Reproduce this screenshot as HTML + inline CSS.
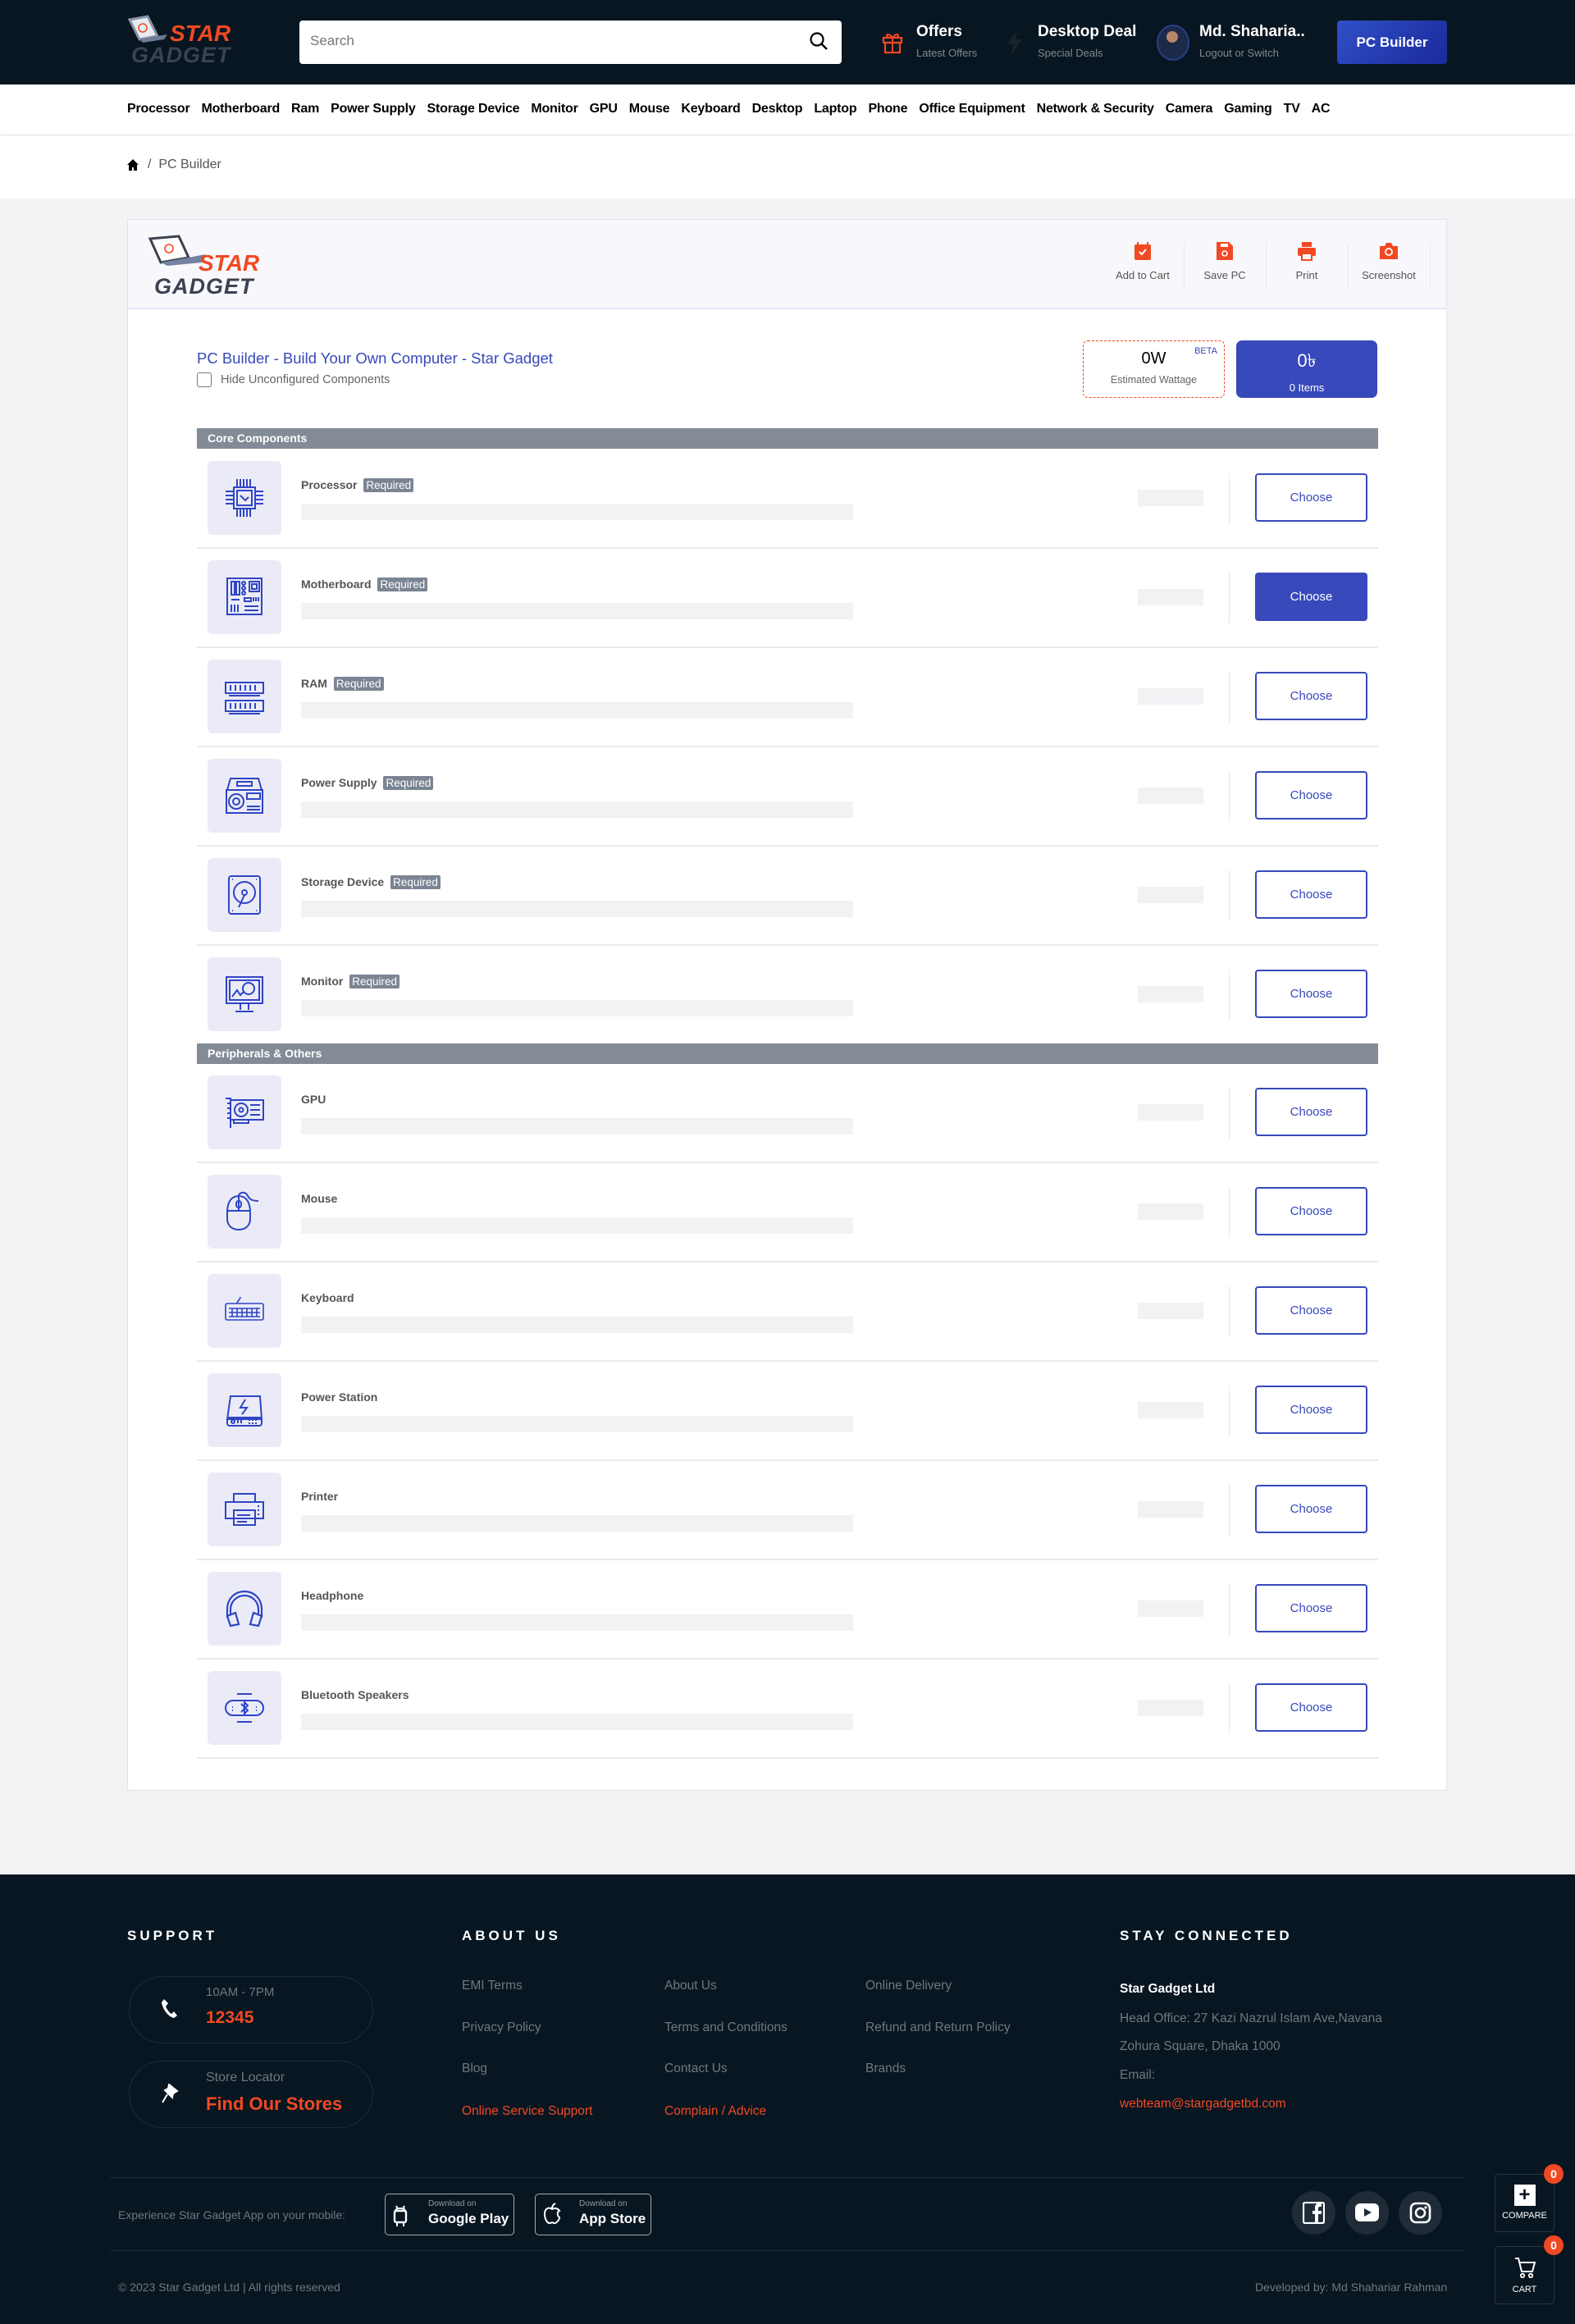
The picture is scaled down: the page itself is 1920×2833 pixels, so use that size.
<!DOCTYPE html>
<html><head><meta charset="utf-8">
<style>
*{box-sizing:border-box;margin:0;padding:0}
body{width:1920px;height:2833px;position:relative;background:#f2f3f5;font-family:"Liberation Sans",sans-serif;overflow:hidden}
.a{position:absolute}
.hdr{left:0;top:0;width:1920px;height:103px;background:#081621}
.nav{left:0;top:103px;width:1920px;height:61px;background:#fff;box-shadow:0 2px 3px rgba(0,0,0,.08)}
.nv span{font-size:16px;font-weight:bold;color:#000;margin-right:14px;letter-spacing:-.2px}
.bc{left:0;top:165px;width:1920px;height:77px;background:#fff}
.card{left:155px;top:267px;width:1609px;height:1916px;background:#fff;border:1px solid #e1e3ea}
.ch{left:0;top:0;width:100%;height:109px;background:#f8f8fc;border-bottom:2px solid #e2e4f3}
.tool{top:26px;width:90px;text-align:center;font-size:13px;color:#555}
.tool svg{display:block;margin:0 auto 10px}
.sep{top:28px;width:1px;height:55px;background:#e6e6ee}
.row{left:240px;width:1440px;height:107px;border-bottom:2px solid #e9e9ec}
.ib{position:absolute;left:13px;top:0;width:90px;height:90px;background:#ebebf7;border-radius:6px}
.ib svg{position:absolute;left:20px;top:20px}
.lb{position:absolute;left:127px;top:21px;font-size:14px;font-weight:bold;color:#555}
.rq{background:#7b8492;color:#fff;font-weight:normal;padding:1px 3px;border-radius:2px;margin-left:4px;font-size:13.5px}
.bar{position:absolute;left:127px;top:52px;width:673px;height:20px;background:#f1f2f4}
.sb{position:absolute;left:1147px;top:35px;width:80px;height:20px;background:#f1f2f4}
.dv{position:absolute;left:1258px;top:15px;width:1px;height:62px;background:#e5e5e5}
.btn{position:absolute;left:1290px;top:15px;width:137px;height:59px;border:2px solid #3749bb;border-radius:4px;color:#3749bb;font-size:15px;text-align:center;line-height:55px}
.btn.f{background:#3749bb;color:#fff}
.sec{left:240px;width:1440px;height:25px;background:#828b96;color:#fff;font-size:14px;font-weight:bold;padding-left:13px;line-height:25px}
.ft{left:0;top:2285px;width:1920px;height:548px;background:#081621}
.fh{font-size:17px;color:#fff;letter-spacing:4px;font-weight:bold}
.fl{font-size:15.5px;color:#6f7780}
.pill{width:298px;height:82px;border:1px solid #1d2b36;border-radius:41px}
.soc{width:53px;height:53px;border-radius:50%;background:#1f2c37}
.flt{width:73px;height:71px;border:1px solid #2a3640;border-radius:4px;background:#081621;color:#fff;font-size:11px;text-align:center}
.bdg{width:24px;height:24px;border-radius:50%;background:#f04923;color:#fff;font-size:14px;font-weight:bold;text-align:center;line-height:24px}
</style></head><body>

<div class="a hdr"></div>
<svg class="a" style="left:152px;top:18px" width="145" height="60" viewBox="0 0 145 60">
<path d="M6 6 L28 2 L40 26 L18 30 Z" fill="#e7ebf2" stroke="#8a92a8" stroke-width="3"/>
<path d="M18 30 L40 26 L52 24 L48 30 L22 34 Z" fill="#6f7a93"/>
<circle cx="22" cy="16" r="5" fill="none" stroke="#f04923" stroke-width="1.5"/>
<text x="55" y="32" font-family="Liberation Sans" font-weight="bold" font-style="italic" font-size="28" fill="#f04923">STAR</text>
<text x="8" y="58" font-family="Liberation Sans" font-weight="bold" font-style="italic" font-size="27" fill="#3b4250" letter-spacing="1">GADGET</text>
</svg>
<div class="a" style="left:365px;top:25px;width:661px;height:53px;background:#fff;border-radius:4px"></div>
<div class="a" style="left:378px;top:40px;font-size:17px;color:#757575">Search</div>
<svg class="a" style="left:986px;top:38px" width="24" height="24" viewBox="0 0 24 24"><circle cx="10" cy="10" r="7.5" fill="none" stroke="#000" stroke-width="2.2"/><path d="M15.5 15.5 L22 22" stroke="#000" stroke-width="2.4"/></svg>
<svg class="a" style="left:1074px;top:36px" width="28" height="30" viewBox="0 0 28 30"><rect x="3" y="10" width="22" height="6" fill="none" stroke="#f04923" stroke-width="2.2"/><rect x="5" y="16" width="18" height="12" fill="none" stroke="#f04923" stroke-width="2.2"/><path d="M14 10 V28 M14 10 C8 2 4 8 10 10 M14 10 C20 2 24 8 18 10" fill="none" stroke="#f04923" stroke-width="2"/></svg>
<div class="a" style="left:1117px;top:28px;color:#fff;font-size:19px;font-weight:bold">Offers</div>
<div class="a" style="left:1117px;top:57px;color:#808890;font-size:13px">Latest Offers</div>
<svg class="a" style="left:1226px;top:36px" width="22" height="32" viewBox="0 0 22 32"><path d="M14 0 L2 18 H10 L6 32 L20 12 H12 Z" fill="#1a232c"/></svg>
<div class="a" style="left:1265px;top:28px;color:#fff;font-size:19px;font-weight:bold">Desktop Deal</div>
<div class="a" style="left:1265px;top:57px;color:#808890;font-size:13px">Special Deals</div>
<div class="a" style="left:1410px;top:30px;width:40px;height:44px;border-radius:50%;background:#1b2a48;border:2px solid #2a3e86"></div>
<div class="a" style="left:1422px;top:38px;width:14px;height:14px;border-radius:50%;background:#b98769"></div>
<div class="a" style="left:1462px;top:28px;color:#fff;font-size:19px;font-weight:bold">Md. Shaharia..</div>
<div class="a" style="left:1462px;top:57px;color:#808890;font-size:13px">Logout or Switch</div>
<div class="a" style="left:1630px;top:25px;width:134px;height:53px;border-radius:4px;background:linear-gradient(135deg,#3050c8,#1a2a9a);color:#fff;font-size:17px;font-weight:bold;text-align:center;line-height:53px">PC Builder</div>

<div class="a nav"></div>
<div class="a nv" style="left:155px;top:124px;white-space:nowrap"><span>Processor</span><span>Motherboard</span><span>Ram</span><span>Power Supply</span><span>Storage Device</span><span>Monitor</span><span>GPU</span><span>Mouse</span><span>Keyboard</span><span>Desktop</span><span>Laptop</span><span>Phone</span><span>Office Equipment</span><span>Network &amp; Security</span><span>Camera</span><span>Gaming</span><span>TV</span><span>AC</span></div>
<div class="a bc"></div>
<svg class="a" style="left:154px;top:193px" width="16" height="16" viewBox="0 0 16 16"><path d="M8 1 L1 8 H3 V15 H7 V11 H9 V15 H13 V8 H15 Z" fill="#000"/></svg>
<div class="a" style="left:180px;top:192px;font-size:16px;color:#555">/&nbsp;&nbsp;PC Builder</div>

<div class="a card">
<div class="a ch"></div>
<svg class="a" style="left:22px;top:18px" width="150" height="76" viewBox="0 0 150 76">
<path d="M5 5 L40 2 L52 28 L18 34 Z" fill="#fff" stroke="#3b4250" stroke-width="3"/>
<path d="M18 34 L52 28 L72 24 L68 34 L26 38 Z" fill="#7583a3"/>
<circle cx="28" cy="17" r="5" fill="none" stroke="#f04923" stroke-width="1.6"/>
<text x="64" y="44" font-family="Liberation Sans" font-weight="bold" font-style="italic" font-size="28" fill="#f04923">STAR</text>
<text x="10" y="72" font-family="Liberation Sans" font-weight="bold" font-style="italic" font-size="27" fill="#3b4250" letter-spacing="1">GADGET</text>
</svg>
<div class="a tool" style="left:1192px"><svg width="22" height="24" viewBox="0 0 22 24"><rect x="1" y="4" width="20" height="19" rx="2" fill="#f04923"/><path d="M5 1V6M17 1V6" stroke="#f04923" stroke-width="2"/><path d="M7 13 L10 16 L15 10" stroke="#fff" stroke-width="2" fill="none"/></svg>Add to Cart</div>
<div class="a sep" style="left:1287px"></div>
<div class="a tool" style="left:1292px"><svg width="22" height="24" viewBox="0 0 22 24"><path d="M1 1H16L21 6V23H1Z" fill="#f04923"/><circle cx="11" cy="15" r="3" fill="none" stroke="#fff" stroke-width="1.6"/><rect x="6" y="3" width="9" height="4" fill="#fff"/></svg>Save PC</div>
<div class="a sep" style="left:1387px"></div>
<div class="a tool" style="left:1392px"><svg width="24" height="24" viewBox="0 0 24 24"><rect x="6" y="1" width="12" height="6" fill="#f04923"/><rect x="1" y="8" width="22" height="10" rx="2" fill="#f04923"/><rect x="6" y="15" width="12" height="8" fill="#fff" stroke="#f04923" stroke-width="2"/></svg>Print</div>
<div class="a sep" style="left:1487px"></div>
<div class="a tool" style="left:1492px"><svg width="24" height="24" viewBox="0 0 24 24"><path d="M1 6H7L9 2H15L17 6H23V22H1Z" fill="#f04923"/><circle cx="12" cy="13" r="4" fill="none" stroke="#fff" stroke-width="1.8"/></svg>Screenshot</div>
<div class="a sep" style="left:1587px"></div>
</div>

<div class="a" style="left:240px;top:426px;font-size:18.5px;color:#3749bb">PC Builder - Build Your Own Computer - Star Gadget</div>
<div class="a" style="left:240px;top:454px;width:18px;height:18px;border:1px solid #777;border-radius:3px"></div>
<div class="a" style="left:269px;top:455px;font-size:14.5px;color:#666">Hide Unconfigured Components</div>
<div class="a" style="left:1320px;top:415px;width:173px;height:70px;border:1.5px dashed #f04923;border-radius:6px;text-align:center">
<div style="font-size:20px;color:#000;margin-top:10px">0W</div><div style="font-size:12.5px;color:#666;margin-top:7px">Estimated Wattage</div>
<div class="a" style="right:8px;top:6px;font-size:11px;color:#3749bb">BETA</div></div>
<div class="a" style="left:1507px;top:415px;width:172px;height:70px;background:#3749bb;border-radius:7px;text-align:center;color:#fff">
<div style="font-size:22px;margin-top:8px">0৳</div><div style="font-size:13px;margin-top:5px">0 Items</div></div>

<div class="a sec" style="top:522px">Core Components</div>

<div class="a row" style="top:562px"><div class="ib"><svg width="50" height="50" viewBox="0 0 50 50" fill="none" stroke="#2f45c5" stroke-width="2"><rect x="12" y="12" width="26" height="26"/><rect x="16" y="16" width="18" height="18"/><path d="M16 2V12M20 2V12M24 2V12M28 2V12M32 2V12M16 38V48M20 38V48M24 38V48M28 38V48M32 38V48M2 17H12M2 22H12M2 27H12M2 32H12M38 17H48M38 22H48M38 27H48M38 32H48M20 22L26 28L30 24"/></svg></div><div class="lb">Processor <span class="rq">Required</span></div><div class="bar"></div><div class="sb"></div><div class="dv"></div><div class="btn">Choose</div></div>
<div class="a row" style="top:683px"><div class="ib"><svg width="50" height="50" viewBox="0 0 50 50" fill="none" stroke="#2f45c5" stroke-width="2"><rect x="4" y="2" width="42" height="44"/><rect x="9" y="6" width="4" height="16"/><rect x="15" y="6" width="4" height="16"/><circle cx="24" cy="8" r="2"/><circle cx="24" cy="14" r="2"/><circle cx="24" cy="20" r="2"/><rect x="31" y="6" width="12" height="12"/><rect x="34" y="9" width="6" height="6"/><rect x="25" y="26" width="8" height="4"/><path d="M36 25V30M39 25V30M42 25V30M9 28H19M9 34V43M13 34V43M17 34V43M25 36H42M25 41H42"/></svg></div><div class="lb">Motherboard <span class="rq">Required</span></div><div class="bar"></div><div class="sb"></div><div class="dv"></div><div class="btn f">Choose</div></div>
<div class="a row" style="top:804px"><div class="ib"><svg width="50" height="50" viewBox="0 0 50 50" fill="none" stroke="#2f45c5" stroke-width="2"><rect x="2" y="8" width="46" height="13"/><rect x="2" y="30" width="46" height="13"/><path d="M8 11V18M14 11V18M20 11V18M26 11V18M32 11V18M38 11V18M8 33V40M14 33V40M20 33V40M26 33V40M32 33V40M38 33V40M6 24H44M6 46H44"/></svg></div><div class="lb">RAM <span class="rq">Required</span></div><div class="bar"></div><div class="sb"></div><div class="dv"></div><div class="btn">Choose</div></div>
<div class="a row" style="top:925px"><div class="ib"><svg width="50" height="50" viewBox="0 0 50 50" fill="none" stroke="#2f45c5" stroke-width="2"><path d="M8 4H42L46 18H4Z"/><rect x="16" y="8" width="18" height="5"/><rect x="3" y="18" width="44" height="28"/><circle cx="15" cy="32" r="9"/><circle cx="15" cy="32" r="4"/><rect x="28" y="22" width="16" height="7"/><path d="M28 38H44M28 42H44"/></svg></div><div class="lb">Power Supply <span class="rq">Required</span></div><div class="bar"></div><div class="sb"></div><div class="dv"></div><div class="btn">Choose</div></div>
<div class="a row" style="top:1046px"><div class="ib"><svg width="50" height="50" viewBox="0 0 50 50" fill="none" stroke="#2f45c5" stroke-width="2"><rect x="6" y="2" width="38" height="46" rx="3"/><circle cx="25" cy="22" r="13"/><circle cx="25" cy="22" r="3"/><path d="M25 25L18 40M10 6h1M39 6h1M10 44h1M39 44h1"/></svg></div><div class="lb">Storage Device <span class="rq">Required</span></div><div class="bar"></div><div class="sb"></div><div class="dv"></div><div class="btn">Choose</div></div>
<div class="a row" style="top:1167px"><div class="ib"><svg width="50" height="50" viewBox="0 0 50 50" fill="none" stroke="#2f45c5" stroke-width="2"><rect x="3" y="4" width="44" height="32"/><rect x="7" y="8" width="36" height="24"/><circle cx="30" cy="18" r="7"/><path d="M10 28L16 20L20 26L24 22M20 36V44M30 36V44M14 46H36"/></svg></div><div class="lb">Monitor <span class="rq">Required</span></div><div class="bar"></div><div class="sb"></div><div class="dv"></div><div class="btn">Choose</div></div>

<div class="a sec" style="top:1272px">Peripherals &amp; Others</div>

<div class="a row" style="top:1311px"><div class="ib"><svg width="50" height="50" viewBox="0 0 50 50" fill="none" stroke="#2f45c5" stroke-width="2"><rect x="8" y="10" width="40" height="24"/><path d="M2 8H8V44M4 14H8M4 20H8M4 26H8M4 32H8M12 34V38H30V34"/><circle cx="21" cy="22" r="8"/><circle cx="21" cy="22" r="2.5"/><path d="M32 16H44M32 22H44M32 28H44"/></svg></div><div class="lb">GPU</div><div class="bar"></div><div class="sb"></div><div class="dv"></div><div class="btn">Choose</div></div>
<div class="a row" style="top:1432px"><div class="ib"><svg width="50" height="50" viewBox="0 0 50 50" fill="none" stroke="#2f45c5" stroke-width="2"><path d="M4 26C4 12 10 6 18 6C26 6 32 12 32 26V34C32 42 26 47 18 47C10 47 4 42 4 34Z"/><path d="M4 24H32M18 6V24"/><rect x="15" y="12" width="6" height="8" rx="3"/><path d="M18 6C18 2 24 0 28 4C30 8 32 12 42 12"/></svg></div><div class="lb">Mouse</div><div class="bar"></div><div class="sb"></div><div class="dv"></div><div class="btn">Choose</div></div>
<div class="a row" style="top:1553px"><div class="ib"><svg width="50" height="50" viewBox="0 0 50 50" fill="none" stroke="#2f45c5" stroke-width="1.6"><rect x="2" y="16" width="46" height="20" rx="2"/><path d="M6 22H44M6 27H44M6 32H44M10 22V32M16 22V32M22 22V32M28 22V32M34 22V32M40 22V32M16 16C16 12 20 12 20 8"/></svg></div><div class="lb">Keyboard</div><div class="bar"></div><div class="sb"></div><div class="dv"></div><div class="btn">Choose</div></div>
<div class="a row" style="top:1674px"><div class="ib"><svg width="50" height="50" viewBox="0 0 50 50" fill="none" stroke="#2f45c5" stroke-width="2"><path d="M8 8H44L46 36H4Z"/><rect x="4" y="34" width="42" height="10" rx="3"/><path d="M26 12L20 22H28L22 30"/><circle cx="11" cy="39" r="2"/><path d="M17 37V41M21 37V41M30 37h2M34 37h2M38 37h2M30 41h2M34 41h2M38 41h2"/></svg></div><div class="lb">Power Station</div><div class="bar"></div><div class="sb"></div><div class="dv"></div><div class="btn">Choose</div></div>
<div class="a row" style="top:1795px"><div class="ib"><svg width="50" height="50" viewBox="0 0 50 50" fill="none" stroke="#2f45c5" stroke-width="2"><rect x="12" y="6" width="26" height="10"/><rect x="2" y="16" width="46" height="20"/><rect x="12" y="26" width="26" height="18"/><path d="M16 32H32M16 36H32M16 40H28M42 20v2M42 25v2M42 30v2"/></svg></div><div class="lb">Printer</div><div class="bar"></div><div class="sb"></div><div class="dv"></div><div class="btn">Choose</div></div>
<div class="a row" style="top:1916px"><div class="ib"><svg width="50" height="50" viewBox="0 0 50 50" fill="none" stroke="#2f45c5" stroke-width="2.2"><path d="M4 36V26C4 12 14 4 25 4C36 4 46 12 46 26V36"/><path d="M8 32V26C8 16 16 9 25 9C34 9 42 16 42 26V32"/><path d="M4 34L14 30L18 44L8 46Z"/><path d="M46 34L36 30L32 44L42 46Z"/></svg></div><div class="lb">Headphone</div><div class="bar"></div><div class="sb"></div><div class="dv"></div><div class="btn">Choose</div></div>
<div class="a row" style="top:2037px"><div class="ib"><svg width="50" height="50" viewBox="0 0 50 50" fill="none" stroke="#2f45c5" stroke-width="2"><rect x="2" y="16" width="46" height="18" rx="9"/><path d="M21 20L29 28L25 32V18L29 22L21 30M16 8H34M16 42H34M10 24h1M10 28h1M39 24h1M39 28h1"/></svg></div><div class="lb">Bluetooth Speakers</div><div class="bar"></div><div class="sb"></div><div class="dv"></div><div class="btn">Choose</div></div>

<div class="a ft"></div>
<div class="a fh" style="left:155px;top:2350px">SUPPORT</div>
<div class="a fh" style="left:563px;top:2350px">ABOUT US</div>
<div class="a fh" style="left:1365px;top:2350px">STAY CONNECTED</div>
<div class="a pill" style="left:157px;top:2409px"></div>
<svg class="a" style="left:196px;top:2436px" width="20" height="24" viewBox="0 0 20 24"><path d="M4 1L9 6L6 10C8 14 10 17 13 19L16 16L20 21L16 24C8 22 2 12 1 5Z" fill="#fff"/></svg>
<div class="a fl" style="left:251px;top:2420px;font-size:15px">10AM - 7PM</div>
<div class="a" style="left:251px;top:2448px;font-size:21px;color:#f04923;font-weight:bold">12345</div>
<div class="a pill" style="left:157px;top:2512px"></div>
<svg class="a" style="left:196px;top:2540px" width="22" height="24" viewBox="0 0 22 24"><path d="M10 1L20 9L15 12L14 17L5 8L9 6Z M8 13L2 23" fill="#fff" stroke="#fff" stroke-width="2"/></svg>
<div class="a fl" style="left:251px;top:2524px;font-size:16px">Store Locator</div>
<div class="a" style="left:251px;top:2552px;font-size:22px;color:#f04923;font-weight:bold">Find Our Stores</div>

<div class="a fl" style="left:563px;top:2412px">EMI Terms</div>
<div class="a fl" style="left:563px;top:2463px">Privacy Policy</div>
<div class="a fl" style="left:563px;top:2513px">Blog</div>
<div class="a fl" style="left:563px;top:2565px;color:#f04923">Online Service Support</div>
<div class="a fl" style="left:810px;top:2412px">About Us</div>
<div class="a fl" style="left:810px;top:2463px">Terms and Conditions</div>
<div class="a fl" style="left:810px;top:2513px">Contact Us</div>
<div class="a fl" style="left:810px;top:2565px;color:#f04923">Complain / Advice</div>
<div class="a fl" style="left:1055px;top:2412px">Online Delivery</div>
<div class="a fl" style="left:1055px;top:2463px">Refund and Return Policy</div>
<div class="a fl" style="left:1055px;top:2513px">Brands</div>

<div class="a" style="left:1365px;top:2416px;font-size:15.5px;color:#fff;font-weight:bold">Star Gadget Ltd</div>
<div class="a fl" style="left:1365px;top:2452px">Head Office: 27 Kazi Nazrul Islam Ave,Navana</div>
<div class="a fl" style="left:1365px;top:2486px">Zohura Square, Dhaka 1000</div>
<div class="a fl" style="left:1365px;top:2521px">Email:</div>
<div class="a" style="left:1365px;top:2556px;font-size:15.5px;color:#f04923">webteam@stargadgetbd.com</div>

<div class="a" style="left:134px;top:2654px;width:1651px;height:1px;background:#1f2c37"></div>
<div class="a fl" style="left:144px;top:2692px;font-size:14px">Experience Star Gadget App on your mobile:</div>
<div class="a" style="left:469px;top:2674px;width:158px;height:51px;border:1px solid #aaa;border-radius:5px;color:#fff">
<svg class="a" style="left:8px;top:12px" width="20" height="28" viewBox="0 0 20 28"><rect x="3" y="8" width="14" height="14" rx="2" fill="none" stroke="#fff" stroke-width="2.4"/><path d="M5 2L7 6M15 2L13 6M6 22V27M14 22V27M4 8C4 4 16 4 16 8" stroke="#fff" stroke-width="2" fill="none"/></svg>
<div class="a" style="left:52px;top:6px;font-size:10px;color:#999">Download on</div><div class="a" style="left:52px;top:20px;font-size:17px;font-weight:bold">Google Play</div></div>
<div class="a" style="left:652px;top:2674px;width:142px;height:51px;border:1px solid #aaa;border-radius:5px;color:#fff">
<svg class="a" style="left:9px;top:10px" width="22" height="28" viewBox="0 0 22 28"><path d="M11 8C7 5 2 7 2 14C2 21 6 26 9 25C10 24 12 24 13 25C16 26 20 21 20 18C17 16 17 11 20 10C18 7 14 6 11 8Z M11 7C11 4 13 2 15 1" fill="none" stroke="#fff" stroke-width="2"/></svg>
<div class="a" style="left:53px;top:6px;font-size:10px;color:#999">Download on</div><div class="a" style="left:53px;top:20px;font-size:17px;font-weight:bold">App Store</div></div>

<div class="a soc" style="left:1575px;top:2671px"><svg class="a" style="left:13px;top:13px" width="27" height="27" viewBox="0 0 27 27"><rect x="1" y="1" width="25" height="25" rx="2" fill="none" stroke="#fff" stroke-width="2.2"/><path d="M19 27V15H23V11H19V8C19 7 20 6 21 6H23V2H19C16 2 15 5 15 7V11H12V15H15V27" fill="#fff"/></svg></div>
<div class="a soc" style="left:1640px;top:2671px"><svg class="a" style="left:12px;top:15px" width="29" height="22" viewBox="0 0 29 22"><rect x="0" y="0" width="29" height="22" rx="6" fill="#fff"/><path d="M11 6L20 11L11 16Z" fill="#1f2c37"/></svg></div>
<div class="a soc" style="left:1705px;top:2671px"><svg class="a" style="left:13px;top:13px" width="27" height="27" viewBox="0 0 27 27"><rect x="2" y="2" width="23" height="23" rx="6" fill="none" stroke="#fff" stroke-width="2.6"/><circle cx="13.5" cy="13.5" r="5.5" fill="none" stroke="#fff" stroke-width="2.6"/><circle cx="20" cy="7" r="1.6" fill="#fff"/></svg></div>

<div class="a" style="left:134px;top:2743px;width:1651px;height:1px;background:#1f2c37"></div>
<div class="a fl" style="left:144px;top:2780px;font-size:14px">© 2023 Star Gadget Ltd | All rights reserved</div>
<div class="a fl" style="left:1530px;top:2780px;font-size:14px">Developed by: Md Shahariar Rahman</div>

<div class="a flt" style="left:1822px;top:2650px"><div style="margin:12px auto 6px;width:26px;height:26px;background:#fff;color:#081621;font-size:24px;line-height:25px;font-weight:bold">+</div>COMPARE</div>
<div class="a bdg" style="left:1882px;top:2638px">0</div>
<div class="a flt" style="left:1822px;top:2738px"><svg style="display:block;margin:12px auto 6px" width="26" height="28" viewBox="0 0 26 28"><path d="M1 2H5L9 18H22L25 7H7" fill="none" stroke="#fff" stroke-width="2"/><circle cx="10" cy="23" r="2.2" fill="none" stroke="#fff" stroke-width="1.8"/><circle cx="20" cy="23" r="2.2" fill="none" stroke="#fff" stroke-width="1.8"/></svg>CART</div>
<div class="a bdg" style="left:1882px;top:2725px">0</div>
</body></html>
